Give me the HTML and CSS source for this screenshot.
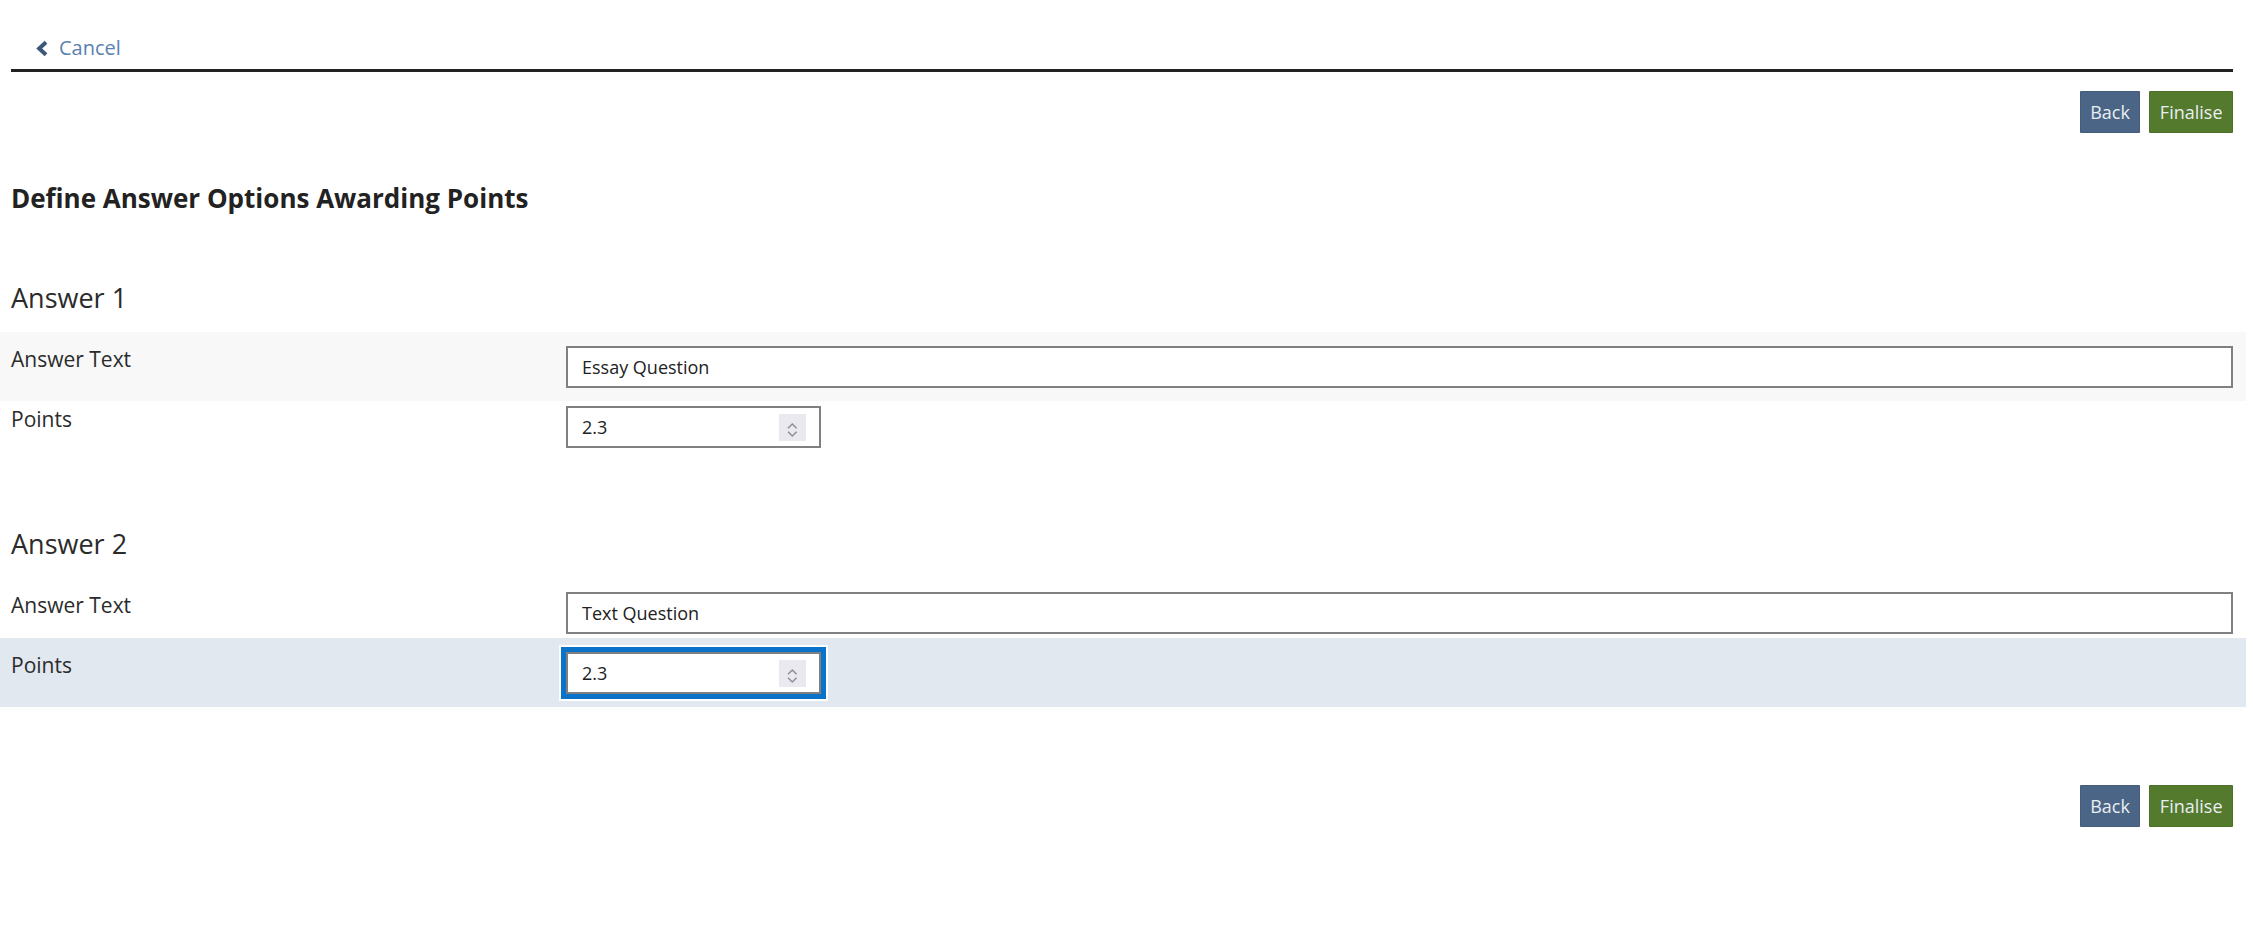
FILE: index.html
```html
<!DOCTYPE html>
<html lang="en">
<head>
<meta charset="utf-8">
<title>Define Answer Options Awarding Points</title>
<link rel="stylesheet" href="styles.css">
</head>
<body>
<div class="page">
  <nav class="crumb">
    <a class="cancel" href="#">
      <svg class="chev" width="14" height="17" viewBox="0 0 14 17" aria-hidden="true">
        <polyline points="11,2.3 4.2,8.5 11,14.7" fill="none" stroke="#3b577c" stroke-width="4" stroke-linejoin="miter" stroke-linecap="butt"/>
      </svg>
      <span>Cancel</span>
    </a>
  </nav>

  <div class="actions top">
    <button class="btn back" type="button">Back</button>
    <button class="btn finalise" type="button">Finalise</button>
  </div>

  <h1 class="title">Define Answer Options Awarding Points</h1>

  <section class="answer">
    <h2 class="answer-title">Answer 1</h2>
    <div class="row shaded">
      <label class="lbl">Answer Text</label>
      <input class="field" type="text" value="Essay Question">
    </div>
    <div class="row">
      <label class="lbl">Points</label>
      <div class="numbox">
        <input class="numfield" type="text" value="2.3">
        <span class="spin">
          <svg width="27" height="27" viewBox="0 0 27 27" aria-hidden="true">
            <polyline points="9,14.3 13.3,10 17.6,14.3" fill="none" stroke="#8e8e96" stroke-width="1.5"/>
            <polyline points="9,17.7 13.3,22 17.6,17.7" fill="none" stroke="#8e8e96" stroke-width="1.5"/>
          </svg>
        </span>
      </div>
    </div>
  </section>

  <section class="answer">
    <h2 class="answer-title">Answer 2</h2>
    <div class="row">
      <label class="lbl">Answer Text</label>
      <input class="field" type="text" value="Text Question">
    </div>
    <div class="row active">
      <label class="lbl">Points</label>
      <div class="numbox focused">
        <input class="numfield" type="text" value="2.3">
        <span class="spin">
          <svg width="27" height="27" viewBox="0 0 27 27" aria-hidden="true">
            <polyline points="9,14.3 13.3,10 17.6,14.3" fill="none" stroke="#8e8e96" stroke-width="1.5"/>
            <polyline points="9,17.7 13.3,22 17.6,17.7" fill="none" stroke="#8e8e96" stroke-width="1.5"/>
          </svg>
        </span>
      </div>
    </div>
  </section>

  <div class="actions bottom">
    <button class="btn back" type="button">Back</button>
    <button class="btn finalise" type="button">Finalise</button>
  </div>
</div>
</body>
</html>
```

FILE: styles.css
```css
* { box-sizing: border-box; }

html, body {
  margin: 0;
  padding: 0;
  background: #ffffff;
}

body {
  font-family: "Open Sans", "Noto Sans", "DejaVu Sans", sans-serif;
  color: #262626;
}

.page {
  padding: 0 20px 0 11px;
}

/* breadcrumb / cancel */
.crumb {
  padding: 33px 0 4px 24px;
  border-bottom: 3px solid #222222;
  line-height: 30px;
  font-size: 20px;
}

.cancel {
  display: inline-flex;
  align-items: center;
  gap: 10px;
  color: #5b81ae;
  text-decoration: none;
}

.chev {
  display: block;
  flex: none;
}

/* action buttons */
.actions {
  display: flex;
  justify-content: flex-end;
  gap: 9px;
}

.actions.top { margin-top: 19px; }
.actions.bottom { margin-top: 77.5px; }

.btn {
  height: 42px;
  padding: 0 9.5px;
  border: 1px solid rgba(0, 0, 0, 0.08);
  border-radius: 1px;
  font-family: "Open Sans", "Noto Sans", sans-serif;
  font-size: 18px;
  line-height: 40px;
  color: #e9eef3;
  cursor: pointer;
}

.btn.back { background: #4b6586; }
.btn.finalise { background: #547a2d; }

/* headings */
.title {
  margin: 50px 0 0;
  font-size: 26px;
  line-height: 30px;
  font-weight: 700;
  color: #222222;
}

.answer { margin-top: 67px; }
.answer + .answer { margin-top: 64.5px; }

.answer-title {
  margin: 0 0 16.5px;
  font-size: 27px;
  line-height: 36px;
  font-weight: 400;
  color: #2b2b2b;
}

/* form rows */
.row {
  display: grid;
  grid-template-columns: 555px 1fr;
  align-items: start;
  margin: 0 -13px 0 -11px;
  padding: 14px 13px 13px 11px;
  min-height: 69px;
}

.row + .row { margin-top: -9px; }

.row.shaded { background: #f8f8f8; }
.row.active { background: #e1e8f0; }

.lbl {
  font-size: 21px;
  line-height: 27px;
  color: #2b2b2b;
}

.field {
  display: block;
  width: 100%;
  height: 42px;
  padding: 0 14px;
  border: 2px solid #808080;
  border-radius: 0;
  background: #ffffff;
  font-family: "Open Sans", "Noto Sans", sans-serif;
  font-size: 18px;
  color: #222222;
  outline: none;
}

.numbox {
  display: flex;
  align-items: center;
  width: 255px;
  height: 42px;
  border: 2px solid #808080;
  background: #ffffff;
}

.numbox.focused {
  outline: 5px solid #0b72c9;
  box-shadow: 0 0 0 7px #ffffff;
}

.numfield {
  flex: 1;
  min-width: 0;
  height: 100%;
  padding: 0 14px;
  border: 0;
  background: transparent;
  font-family: "Open Sans", "Noto Sans", sans-serif;
  font-size: 18px;
  color: #222222;
  outline: none;
}

.spin {
  flex: none;
  width: 27px;
  height: 27px;
  margin-right: 13px;
  background: #e9e9ef;
}

.spin svg { display: block; }
```
